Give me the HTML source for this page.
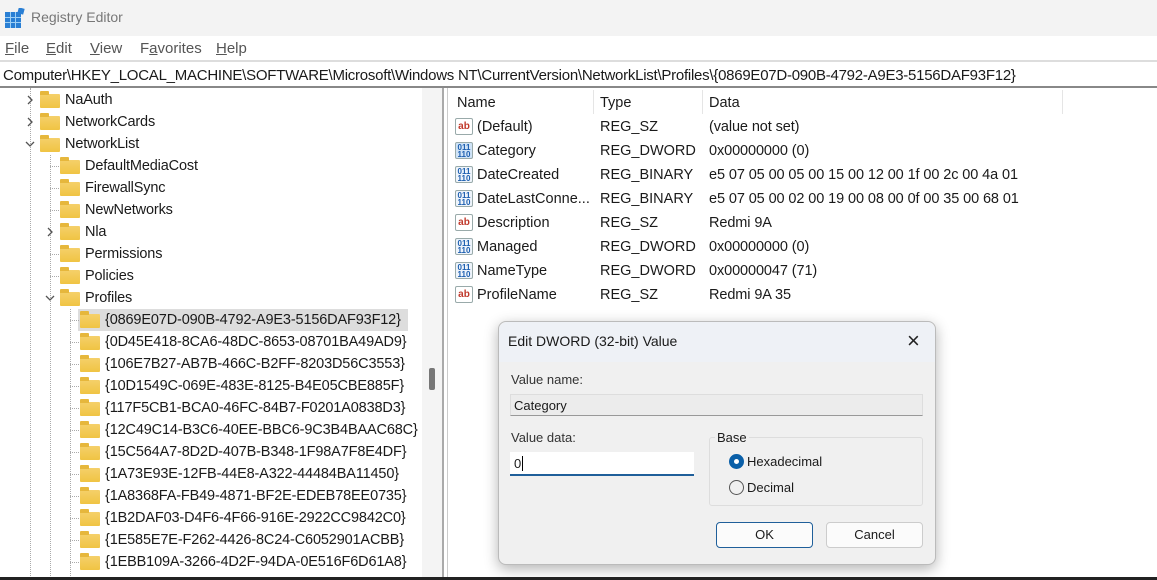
<!DOCTYPE html><html><head><style>
*{margin:0;padding:0;box-sizing:border-box}
html,body{width:1157px;height:580px;overflow:hidden}
body{background:#fff;font-family:"Liberation Sans",sans-serif;color:#1a1a1a;position:relative}
.a{position:absolute;white-space:nowrap}
.t{font-size:14.5px}
.m{position:absolute;top:40px;font-size:15px;color:#555}
.f{position:absolute;width:20px;height:14px;background:linear-gradient(#f5d06a,#f0c443);border-radius:1px}
.f:before{content:"";position:absolute;left:0;top:-3px;width:9px;height:4px;background:#e6b73c;border-radius:1px 1px 0 0}
.ic{position:absolute;width:18px;height:17px;border:1px solid #9aa;border-radius:2px;font-size:10px;font-weight:bold;text-align:center;line-height:15px}
</style></head><body>
<div class="a" style="left:0;top:0;width:1157px;height:36px;background:#f3f3f3"></div>
<svg class="a" style="left:5px;top:8px" width="20" height="20"><rect x="0" y="4" width="16" height="16" fill="#2a7fd4"/><g stroke="#9fd0f5" stroke-width="1"><line x1="0" y1="9.5" x2="16" y2="9.5"/><line x1="0" y1="14.5" x2="16" y2="14.5"/><line x1="5.5" y1="4" x2="5.5" y2="20"/><line x1="10.5" y1="4" x2="10.5" y2="20"/></g><rect x="13" y="0" width="6" height="6" fill="#2a7fd4" transform="rotate(15 16 3)"/></svg>
<div class="a" style="left:31px;top:9px;font-size:14px;color:#777">Registry Editor</div>
<div class="m" style="left:5px"><u>F</u>ile</div>
<div class="m" style="left:46px"><u>E</u>dit</div>
<div class="m" style="left:90px"><u>V</u>iew</div>
<div class="m" style="left:140px">F<u>a</u>vorites</div>
<div class="m" style="left:216px"><u>H</u>elp</div>
<div class="a" style="left:0;top:60px;width:1157px;height:2px;background:#ddd"></div>
<div class="a" style="left:3px;top:67px;font-size:15px;letter-spacing:-0.25px">Computer\HKEY_LOCAL_MACHINE\SOFTWARE\Microsoft\Windows NT\CurrentVersion\NetworkList\Profiles\{0869E07D-090B-4792-A9E3-5156DAF93F12}</div>
<div class="a" style="left:0;top:86px;width:1157px;height:2px;background:#888"></div>
<div class="a" style="left:422px;top:88px;width:20px;height:492px;background:#f4f4f4"></div>
<div class="a" style="left:429px;top:368px;width:6px;height:22px;background:#777;border-radius:2px"></div>
<div class="a" style="left:442px;top:88px;width:2px;height:492px;background:#aaa"></div>
<div class="a" style="left:447px;top:88px;width:1px;height:492px;background:#ccc"></div>
<div class="a" style="left:30px;top:88px;height:492px;border-left:1px dotted #aaa"></div>
<div class="a" style="left:50px;top:155px;height:425px;border-left:1px dotted #aaa"></div>
<div class="a" style="left:70px;top:309px;height:271px;border-left:1px dotted #aaa"></div>
<div class="a" style="left:78px;top:309px;width:330px;height:22px;background:#ddd"></div>
<div id="tree"></div>
<div class="a t" style="left:457px;top:95px">Name</div>
<div class="a t" style="left:600px;top:95px">Type</div>
<div class="a t" style="left:709px;top:95px">Data</div>
<div class="a" style="left:593px;top:90px;width:1px;height:24px;background:#e5e5e5"></div>
<div class="a" style="left:702px;top:90px;width:1px;height:24px;background:#e5e5e5"></div>
<div class="a" style="left:1062px;top:90px;width:1px;height:24px;background:#e5e5e5"></div>
<div id="list"></div>
<div class="a" style="left:498px;top:321px;width:438px;height:244px;background:#f0f0f0;border:1px solid #bbb;border-radius:8px;box-shadow:0 4px 14px rgba(0,0,0,.3)">
<div class="a" style="left:0;top:0;width:436px;height:40px;background:#eef1f6;border-radius:8px 8px 0 0"></div>
<div class="a" style="left:9px;top:11px;font-size:14px">Edit DWORD (32-bit) Value</div>
<div class="a" style="left:408px;top:6px;font-size:22px;font-weight:200;color:#222">×</div>
<div class="a" style="left:12px;top:50px;font-size:13px;color:#333">Value name:</div>
<div class="a" style="left:11px;top:72px;width:413px;height:22px;background:#ececec;border:1px solid #ddd;border-bottom:1px solid #999;font-size:13px;padding:3px 3px">Category</div>
<div class="a" style="left:12px;top:108px;font-size:13px;color:#333">Value data:</div>
<div class="a" style="left:11px;top:130px;width:184px;height:24px;background:#fff;border-bottom:2px solid #1f5f9a;font-size:13px;padding:4px 4px">0<span style="border-left:1px solid #000;margin-left:1px"></span></div>
<div class="a" style="left:210px;top:115px;width:214px;height:69px;border:1px solid #ddd;border-radius:3px"></div>
<div class="a" style="left:216px;top:108px;font-size:13px;background:#f0f0f0;padding:0 2px">Base</div>
<div class="a" style="left:230px;top:132px;width:15px;height:15px;border-radius:50%;background:#0a5fa8"><div style="margin:5px;width:5px;height:5px;border-radius:50%;background:#fff"></div></div>
<div class="a" style="left:248px;top:132px;font-size:13px">Hexadecimal</div>
<div class="a" style="left:230px;top:158px;width:15px;height:15px;border-radius:50%;border:1px solid #555"></div>
<div class="a" style="left:248px;top:158px;font-size:13px">Decimal</div>
<div class="a" style="left:217px;top:200px;width:97px;height:26px;background:#fbfbfb;border:1px solid #1f5f9a;border-radius:4px;font-size:13px;text-align:center;line-height:24px">OK</div>
<div class="a" style="left:327px;top:200px;width:97px;height:26px;background:#fbfbfb;border:1px solid #ccc;border-radius:4px;font-size:13px;text-align:center;line-height:24px">Cancel</div>
</div>
<div class="a" style="left:0;top:577px;width:1157px;height:3px;background:#222"></div>
<script>
var T=[[1,'NaAuth','>'],[1,'NetworkCards','>'],[1,'NetworkList','v'],[2,'DefaultMediaCost'],[2,'FirewallSync'],[2,'NewNetworks'],[2,'Nla','>'],[2,'Permissions'],[2,'Policies'],[2,'Profiles','v'],
[3,'{0869E07D-090B-4792-A9E3-5156DAF93F12}'],[3,'{0D45E418-8CA6-48DC-8653-08701BA49AD9}'],[3,'{106E7B27-AB7B-466C-B2FF-8203D56C3553}'],[3,'{10D1549C-069E-483E-8125-B4E05CBE885F}'],[3,'{117F5CB1-BCA0-46FC-84B7-F0201A0838D3}'],[3,'{12C49C14-B3C6-40EE-BBC6-9C3B4BAAC68C}'],[3,'{15C564A7-8D2D-407B-B348-1F98A7F8E4DF}'],[3,'{1A73E93E-12FB-44E8-A322-44484BA11450}'],[3,'{1A8368FA-FB49-4871-BF2E-EDEB78EE0735}'],[3,'{1B2DAF03-D4F6-4F66-916E-2922CC9842C0}'],[3,'{1E585E7E-F262-4426-8C24-C6052901ACBB}'],[3,'{1EBB109A-3266-4D2F-94DA-0E516F6D61A8}']];
var h='';T.forEach(function(r,i){var y=100+i*22,x=20+r[0]*20;
if(r[2])h+='<svg class="a" style="left:'+(x-15)+'px;top:'+(y-5)+'px" width="10" height="10"><path d="'+(r[2]=='>'?'M3 1L7 5L3 9':'M1 3L5 7L9 3')+'" fill="none" stroke="#555" stroke-width="1.3"/></svg>';
else h+='<div class="a" style="left:'+(x-10)+'px;top:'+y+'px;width:9px;border-top:1px dotted #aaa"></div>';
h+='<div class="f" style="left:'+x+'px;top:'+(y-6)+'px"></div><div class="a t" style="left:'+(x+25)+'px;top:'+(y-8)+'px;letter-spacing:-0.15px">'+r[1]+'</div>';});
document.getElementById('tree').innerHTML=h;
var L=[['ab','(Default)','REG_SZ','(value not set)'],['01','Category','REG_DWORD','0x00000000 (0)'],['01','DateCreated','REG_BINARY','e5 07 05 00 05 00 15 00 12 00 1f 00 2c 00 4a 01'],['01','DateLastConne...','REG_BINARY','e5 07 05 00 02 00 19 00 08 00 0f 00 35 00 68 01'],['ab','Description','REG_SZ','Redmi 9A'],['01','Managed','REG_DWORD','0x00000000 (0)'],['01','NameType','REG_DWORD','0x00000047 (71)'],['ab','ProfileName','REG_SZ','Redmi 9A 35']];
h='';L.forEach(function(r,i){var y=127+i*24;
h+=r[0]=='ab'?'<div class="ic" style="left:455px;top:'+(y-9)+'px;color:#c0392b;background:#fff">ab</div>':'<div class="ic" style="left:455px;top:'+(y-9)+'px;color:#1d5fb0;background:'+(i==1?'#cfe3f7':'#eef4fb')+';font-size:8px;line-height:7px;padding-top:1px">011<br>110</div>';
h+='<div class="a t" style="left:477px;top:'+(y-8)+'px">'+r[1]+'</div><div class="a t" style="left:600px;top:'+(y-8)+'px">'+r[2]+'</div><div class="a t" style="left:709px;top:'+(y-8)+'px;letter-spacing:-0.1px">'+r[3]+'</div>';});
document.getElementById('list').innerHTML=h;
</script>
</body></html>
